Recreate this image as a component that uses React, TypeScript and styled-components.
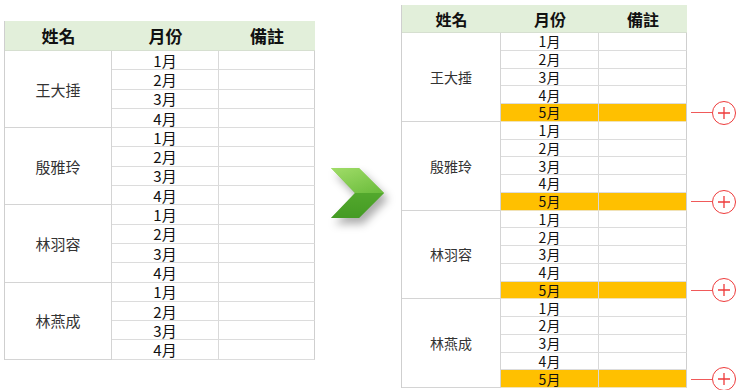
import React from "react";
import styled, { createGlobalStyle } from "styled-components";

const Global = createGlobalStyle`
  html, body { margin: 0; padding: 0; background: #fff; }
  body { width: 740px; height: 390px; overflow: hidden; font-family: "Noto Sans CJK TC", "Noto Sans", sans-serif; }
`;

const Page = styled.div`
  display: flex;
  align-items: flex-start;
  width: 740px;
  height: 390px;
`;

const Table = styled.div<{ $cols: string; $head: number; $row: number; $top: number; $left: number }>`
  display: grid;
  grid-template-columns: ${(p) => p.$cols};
  grid-template-rows: ${(p) => p.$head}px;
  grid-auto-rows: ${(p) => p.$row}px;
  margin-top: ${(p) => p.$top}px;
  margin-left: ${(p) => p.$left}px;
  border-left: 1px solid #cfcfcf;
  box-sizing: border-box;
`;

const Head = styled.div<{ $size: number }>`
  background: #e2efda;
  display: flex;
  align-items: center;
  justify-content: center;
  font-weight: 700;
  font-size: ${(p) => p.$size}px;
  color: #111;
  border-bottom: 1px solid #d6dfd0;
  box-sizing: border-box;
  line-height: 1;
`;

const NameCell = styled.div<{ $span: number; $size: number }>`
  grid-row: span ${(p) => p.$span};
  grid-column: 1;
  display: flex;
  align-items: center;
  justify-content: center;
  font-size: ${(p) => p.$size}px;
  line-height: 1;
  color: #333;
  border-right: 1px solid #d4d4d4;
  border-bottom: 1px solid #d4d4d4;
  box-sizing: border-box;
`;

const Cell = styled.div<{ $gold?: boolean; $edge?: boolean; $col: number; $size: number }>`
  grid-column: ${(p) => p.$col};
  display: flex;
  align-items: center;
  justify-content: center;
  font-size: ${(p) => p.$size}px;
  line-height: 1;
  color: #111;
  background: ${(p) => (p.$gold ? "#ffc000" : "#fff")};
  border-right: 1px solid ${(p) => (p.$edge ? "#cfcfcf" : "#d9d9d9")};
  border-bottom: 1px solid ${(p) => (p.$gold ? "#f0e2b8" : "#dcdcdc")};
  box-sizing: border-box;
`;

const ArrowBox = styled.div`
  width: 88px;
  padding-top: 168px;
  padding-left: 16px;
  box-sizing: border-box;
  svg { display: block; overflow: visible; filter: drop-shadow(4px 6px 4px rgba(0,0,0,0.32)); }
`;

const RightBlock = styled.div`
  display: flex;
  align-items: flex-start;
`;

const Markers = styled.div<{ $head: number; $row: number; $count: number }>`
  display: grid;
  margin-top: 5px;
  grid-template-rows: ${(p) => p.$head}px repeat(${(p) => p.$count}, ${(p) => p.$row}px);
  width: 53px;
`;

const Marker = styled.div<{ $row: number }>`
  grid-row: ${(p) => p.$row};
  display: flex;
  align-items: center;
  padding-left: 4px;
  height: 100%;
`;

const Line = styled.div`
  width: 21px;
  height: 1px;
  background: #f05a5a;
  flex: none;
`;

const Circle = styled.div`
  width: 24px;
  height: 24px;
  border: 1.3px solid #ee3b3b;
  border-radius: 50%;
  box-sizing: border-box;
  flex: none;
  display: flex;
  align-items: center;
  justify-content: center;
`;

const names = ["王大捶", "殷雅玲", "林羽容", "林燕成"];

function DataTable({
  months,
  cols,
  head,
  row,
  top,
  left,
  headSize,
  size,
}: {
  months: number;
  cols: string;
  head: number;
  row: number;
  top: number;
  left: number;
  headSize: number;
  size: number;
}) {
  return (
    <Table $cols={cols} $head={head} $row={row} $top={top} $left={left}>
      <Head $size={headSize}>姓名</Head>
      <Head $size={headSize}>月份</Head>
      <Head $size={headSize}>備註</Head>
      {names.map((n) => (
        <React.Fragment key={n}>
          <NameCell $span={months} $size={size}>{n}</NameCell>
          {Array.from({ length: months }).map((_, i) => (
            <React.Fragment key={i}>
              <Cell $gold={i === 4} $col={2} $size={size}>{i + 1}月</Cell>
              <Cell $gold={i === 4} $edge $col={3} $size={size} />
            </React.Fragment>
          ))}
        </React.Fragment>
      ))}
    </Table>
  );
}

function Arrow() {
  return (
    <svg width="54" height="51" viewBox="0 0 54 51">
      <defs>
        <linearGradient id="ag" x1="0" y1="0" x2="0" y2="1">
          <stop offset="0" stopColor="#8fd456" />
          <stop offset="0.5" stopColor="#5cb132" />
          <stop offset="1" stopColor="#3f9620" />
        </linearGradient>
        <linearGradient id="ah" x1="0" y1="0" x2="1" y2="1">
          <stop offset="0" stopColor="#a4de6c" />
          <stop offset="1" stopColor="#6cbd3c" />
        </linearGradient>
      </defs>
      <polygon points="0,0 28,0 53,25 28,50 0,50 24,25" fill="url(#ag)" />
      <polygon points="0,0 28,0 53,25 24,25" fill="url(#ah)" opacity="0.85" />
      <polygon points="24,25 53,25 28,50 0,50" fill="#4aa027" opacity="0.5" />
    </svg>
  );
}

function Plus() {
  return (
    <svg width="14" height="14" viewBox="0 0 14 14">
      <path d="M7 1 V13 M1 7 H13" stroke="#ee3b3b" strokeWidth="1.3" fill="none" />
    </svg>
  );
}

export default function App() {
  return (
    <>
      <Global />
      <Page>
        <DataTable months={4} cols="107px 107px 96px" head={30} row={19.31} top={21} left={4} headSize={17} size={15} />
        <ArrowBox>
          <Arrow />
        </ArrowBox>
        <RightBlock>
          <DataTable months={5} cols="99px 98px 88px" head={28} row={17.75} top={5} left={0} headSize={16} size={14} />
          <Markers $head={28} $row={17.75} $count={20}>
            {[6, 11, 16, 21].map((r) => (
              <Marker key={r} $row={r}>
                <Line />
                <Circle>
                  <Plus />
                </Circle>
              </Marker>
            ))}
          </Markers>
        </RightBlock>
      </Page>
    </>
  );
}
